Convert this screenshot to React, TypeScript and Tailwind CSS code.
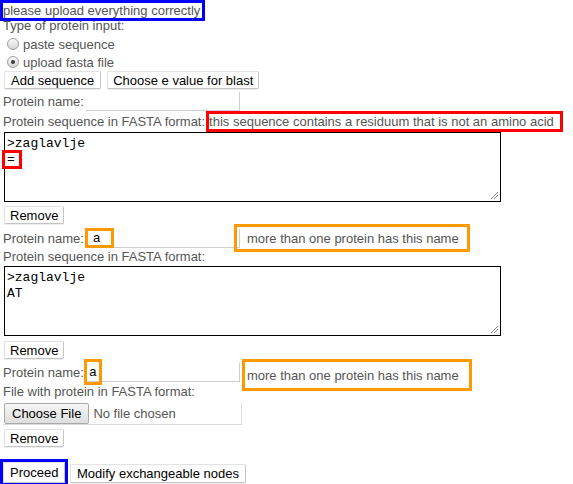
import React from 'react'

function Btn({ children, className = '' }: { children: React.ReactNode; className?: string }) {
  return (
    <span
      className={
        'inline-flex h-[18px] items-center rounded-[2px] border border-[#c4c4c4] border-l-[#e2e2e2] border-t-[#e2e2e2] bg-white text-[13px] leading-none text-black shadow-[0_1px_0_#eee] ' +
        className
      }
    >
      {children}
    </span>
  )
}

function Radio({ checked }: { checked?: boolean }) {
  return (
    <span className="ml-[7px] mr-[4px] inline-flex h-[12px] w-[12px] items-center justify-center rounded-full border border-[#a0a0a0] bg-gradient-to-b from-[#fafafa] to-[#d4d4d4]">
      {checked && <span className="h-[4px] w-[4px] rounded-full bg-[#3a3a3a]" />}
    </span>
  )
}

function NameInput({ value }: { value?: React.ReactNode }) {
  return (
    <div className="ml-[2px] flex h-[19px] w-[154px] items-center border-b border-r border-[#cfcfcf] pl-[4px] text-black">
      {value}
    </div>
  )
}

function Grip() {
  return (
    <svg className="absolute bottom-[2px] right-[2px]" width="8" height="8" viewBox="0 0 8 8">
      <line x1="1" y1="8" x2="8" y2="1" stroke="#888" strokeWidth="1" />
      <line x1="4" y1="8" x2="8" y2="4" stroke="#888" strokeWidth="1" />
    </svg>
  )
}

function FastaBox({ children }: { children: React.ReactNode }) {
  return (
    <div className="relative ml-[4px] h-[70px] w-[497px] border border-black px-[2px] pt-[3px] font-['Liberation_Mono',monospace] text-[13px] leading-[16px] text-black">
      {children}
      <Grip />
    </div>
  )
}

export default function App() {
  return (
    <div className="h-[484px] w-[573px] overflow-hidden bg-white font-['Liberation_Sans',Arial,sans-serif] text-[13px] leading-[15px] text-[#555]">
      <div className="pl-[3px] pt-[3px]">
        <span className="inline-block pr-[2px] outline-3 outline-[#0000ff]">please upload everything correctly</span>
      </div>
      <div className="h-[17px] pl-[3px]">Type of protein input:</div>
      <div className="flex h-[18px] items-center">
        <Radio />
        paste sequence
      </div>
      <div className="flex h-[18px] items-center">
        <Radio checked />
        upload fasta file
      </div>
      <div className="flex gap-[6px] pl-[4px]">
        <Btn className="px-[6px]">Add sequence</Btn>
        <Btn className="px-[5px]">Choose e value for blast</Btn>
      </div>

      <div className="mt-[2px] flex h-[21px] items-center pl-[3px]">
        <span>Protein name:</span>
        <NameInput />
      </div>
      <div className="flex h-[18px] items-center pl-[3px]">
        <span>Protein sequence in FASTA format:</span>
        <span className="ml-[4px] inline-block pr-[6px] outline-3 outline-[#ff0000]">this sequence contains a residuum that is not an amino acid</span>
      </div>
      <div className="mt-[2px]">
        <FastaBox>
          <div>&gt;zaglavlje</div>
          <div>
            <span className="-ml-[2px] mt-[1px] inline-block h-[13px] w-[14px] pl-[2px] leading-[13px] outline-3 outline-[#ff0000]">=</span>
          </div>
        </FastaBox>
      </div>
      <div className="mt-[4px] pl-[4px]">
        <Btn className="px-[5px]">Remove</Btn>
      </div>

      <div className="mt-[4px] flex h-[20px] items-center pl-[3px]">
        <span>Protein name:</span>
        <NameInput
          value={
            <span className="-ml-[2px] inline-block h-[14px] w-[23px] pl-[5px] leading-[14px] outline-3 outline-[#ff9900]">a</span>
          }
        />
        <span className="-ml-[3px] inline-flex h-[22px] items-center pl-[10px] pr-[8px] outline-3 outline-[#ff9900]">
          more than one protein has this name
        </span>
      </div>
      <div className="h-[17px] pl-[3px] leading-[17px]">Protein sequence in FASTA format:</div>
      <div className="mt-[1px]">
        <FastaBox>
          <div>&gt;zaglavlje</div>
          <div>AT</div>
        </FastaBox>
      </div>
      <div className="mt-[5px] pl-[4px]">
        <Btn className="px-[5px]">Remove</Btn>
      </div>

      <div className="mt-[3px] flex h-[20px] items-center pl-[3px]">
        <span>Protein name:</span>
        <NameInput
          value={
            <span className="-ml-[3px] inline-flex h-[20px] w-[12px] items-center justify-center outline-3 outline-[#ff9900]">a</span>
          }
        />
        <span className="ml-[5px] inline-flex h-[26px] items-center self-start pl-[2px] pr-[10px] outline-3 outline-[#ff9900]">
          more than one protein has this name
        </span>
      </div>
      <div className="mt-[2px] h-[16px] pl-[3px] leading-[16px]">File with protein in FASTA format:</div>
      <div className="ml-[3px] mt-[3px] flex h-[22px] w-[239px] items-center border-b border-r border-[#dcdcdc] pl-[1px]">
        <span className="inline-flex h-[21px] items-center rounded-[2px] border border-[#a9a9a9] bg-gradient-to-b from-[#f6f6f6] to-[#dedede] px-[7px] text-black">
          Choose File
        </span>
        <span className="ml-[4px]">No file chosen</span>
      </div>
      <div className="mt-[4px] pl-[4px]">
        <Btn className="px-[5px]">Remove</Btn>
      </div>

      <div className="mt-[15px] flex items-start pl-[3px]">
        <span className="outline-3 outline-[#0000ff]">
          <Btn className="h-[21px] w-[62px] px-[6px]">Proceed</Btn>
        </span>
        <Btn className="ml-[5px] mt-[2px] h-[19px] px-[6px]">Modify exchangeable nodes</Btn>
      </div>
    </div>
  )
}
